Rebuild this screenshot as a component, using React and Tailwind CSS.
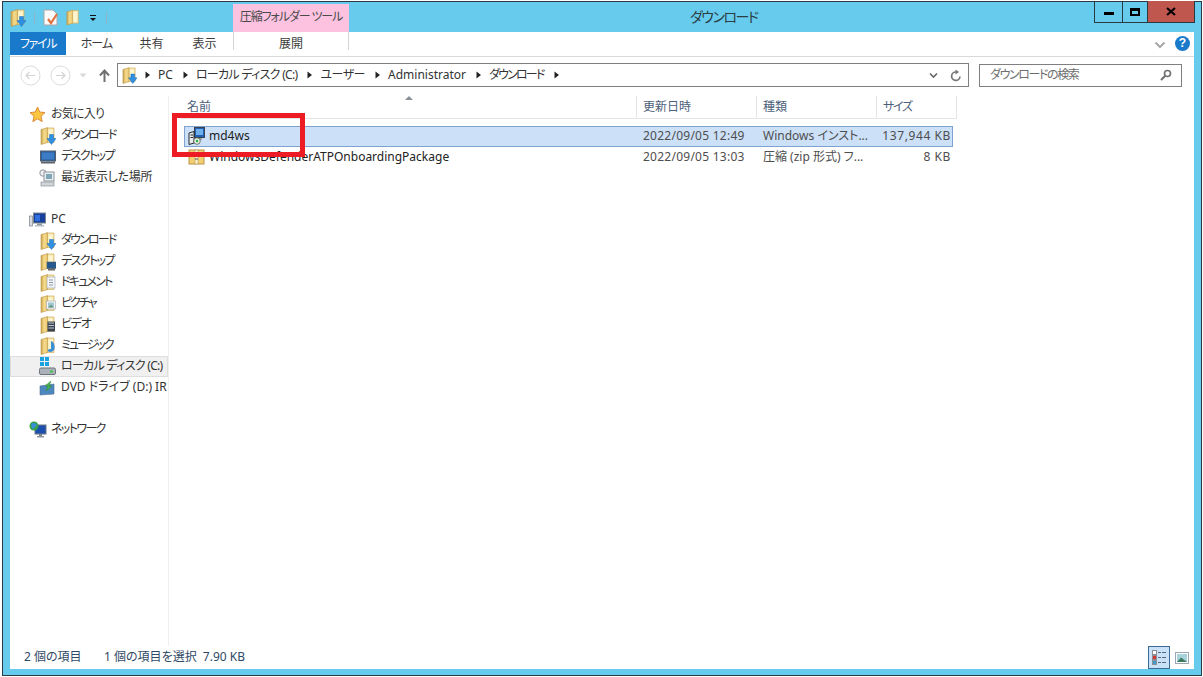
import React from "react";

const Folder = ({ children, w = 16, h = 18 }) => (
  <svg width={w} height={h} viewBox="0 0 16 18" className="shrink-0">
    <defs>
      <linearGradient id="fold" x1="0" y1="0" x2="1" y2="0">
        <stop offset="0" stopColor="#c9a24e" />
        <stop offset="0.5" stopColor="#f6dc8c" />
        <stop offset="1" stopColor="#e8c66f" />
      </linearGradient>
    </defs>
    <path d="M6 1 L14 1 L14 15.5 L6 15.5 Z" fill="#f8e7a8" stroke="#cfae66" strokeWidth="0.7" />
    <path d="M1 2.5 L7.5 0.8 L7.5 15.5 L1 17.5 Z" fill="url(#fold)" stroke="#b89346" strokeWidth="0.6" />
    <path d="M8.5 2.5 L12.8 2.5 L12.8 14 L8.5 14 Z" fill="#fdf4d0" />
    {children}
  </svg>
);
const DownArrow = () => (
  <path d="M9.5 7.5 H13.5 V11.5 H16 L11.5 17.5 L7 11.5 H9.5 Z" fill="#2f8fe0" stroke="#1b6cb8" strokeWidth="0.5" />
);
const DlFolder = () => <Folder><DownArrow /></Folder>;
const DeskFolder = () => (
  <Folder>
    <rect x="7" y="9" width="9" height="6.5" fill="#24588f" stroke="#4a5a6a" strokeWidth="0.6" />
    <rect x="8" y="16" width="7" height="1.5" fill="#666" />
  </Folder>
);
const DocFolder = () => (
  <Folder>
    <rect x="7" y="3" width="8" height="11" fill="#f4f6f8" stroke="#9aa6b2" strokeWidth="0.6" />
    <path d="M9 6H13M9 8.5H13M9 11H13" stroke="#7c8ea0" strokeWidth="0.9" />
  </Folder>
);
const PicFolder = () => (
  <Folder>
    <rect x="6.5" y="6" width="9" height="8" fill="#f7f7f7" stroke="#9aa6b2" strokeWidth="0.6" />
    <rect x="8" y="7.5" width="6" height="5" fill="#9ec6cf" />
    <path d="M8 12.5 L11 10 L14 12.5Z" fill="#5f8f7a" />
  </Folder>
);
const VidFolder = () => (
  <Folder>
    <rect x="7.5" y="5.5" width="7.5" height="10" fill="#3d4650" />
    <path d="M8.5 7H14M8.5 9.5H14M8.5 12H14" stroke="#b9c6d2" strokeWidth="1" />
  </Folder>
);
const MusicFolder = () => (
  <Folder>
    <path d="M10 15 C7 15 7 12 10 12 L11 12 L11 4 C14 5 15 8 14.5 12 C14 14 12 15 10 15Z" fill="#3b8fd6" />
  </Folder>
);

const Star = () => (
  <svg width="17" height="17" viewBox="0 0 17 17" className="shrink-0">
    <path d="M8.5 1 L10.7 6 L16 6.6 L12 10.2 L13.2 15.6 L8.5 12.8 L3.8 15.6 L5 10.2 L1 6.6 L6.3 6 Z" fill="#fbc63f" stroke="#dc8a3a" strokeWidth="1" />
  </svg>
);
const Desktop = () => (
  <svg width="16" height="14" viewBox="0 0 16 14" className="shrink-0">
    <rect x="0.5" y="1" width="15" height="10" fill="#2a5f9e" stroke="#56616d" />
    <rect x="2" y="2.5" width="12" height="7" fill="#3c7cc4" />
    <rect x="1" y="11.5" width="14" height="2" fill="#5a6570" />
  </svg>
);
const Recent = () => (
  <svg width="17" height="18" viewBox="0 0 17 18" className="shrink-0">
    <circle cx="4" cy="4" r="3.2" fill="#f2f2f2" stroke="#8d959c" />
    <rect x="5" y="3" width="10" height="9" fill="#e8edf0" stroke="#8d959c" />
    <rect x="7" y="5" width="6" height="5" fill="#7fa6b5" />
    <rect x="2" y="13" width="13" height="4" fill="#cfd4d8" stroke="#8d959c" strokeWidth="0.7" />
  </svg>
);
const PcIcon = () => (
  <svg width="17" height="16" viewBox="0 0 17 16" className="shrink-0">
    <rect x="0.5" y="4" width="3" height="10" fill="#d7dbdf" stroke="#7a838b" strokeWidth="0.7" />
    <rect x="4.5" y="1" width="12" height="10" fill="#16409c" stroke="#7d8790" />
    <path d="M6 3 H11 V9 H6Z" fill="#2f6fe0" />
    <rect x="8" y="11.5" width="5" height="1.5" fill="#8d959c" />
    <rect x="6" y="13" width="9" height="1.5" fill="#b6bcc2" />
  </svg>
);
const Drive = () => (
  <svg width="17" height="19" viewBox="0 0 17 19" className="shrink-0">
    <rect x="1" y="0" width="4" height="4" fill="#19a2e4" />
    <rect x="6" y="0" width="4" height="4" fill="#19a2e4" />
    <rect x="1" y="5" width="4" height="4" fill="#19a2e4" />
    <rect x="6" y="5" width="4" height="4" fill="#19a2e4" />
    <rect x="0.5" y="11" width="16" height="6.5" rx="1.5" fill="#aab1b8" stroke="#6c747c" />
    <rect x="11" y="13.5" width="3" height="2" fill="#3fc94a" />
  </svg>
);
const Dvd = () => (
  <svg width="17" height="16" viewBox="0 0 17 16" className="shrink-0">
    <path d="M1 6 L15 4 L15 14 L1 15 Z" fill="#4c87bf" stroke="#4d6f92" strokeWidth="0.6" />
    <path d="M12 1 L6 6 L9 6 L7 11 L13 6 L10 6 Z" fill="#48b54a" stroke="#2f8a36" strokeWidth="0.5" />
  </svg>
);
const Network = () => (
  <svg width="18" height="17" viewBox="0 0 18 17" className="shrink-0">
    <rect x="6" y="4" width="11" height="9" fill="#1b4fb0" stroke="#6d7780" />
    <rect x="10" y="13" width="3" height="2" fill="#7d868e" />
    <rect x="8" y="15" width="7" height="1.5" fill="#8f979e" />
    <circle cx="5" cy="5" r="4.5" fill="#35a24a" />
    <path d="M2 3 C4 1 7 2 8 4 C6 5 6 7 4 8 C2 7 3 5 2 3Z" fill="#3a8fd8" />
  </svg>
);

const Msi = () => (
  <svg width="17" height="18" viewBox="0 0 17 18" className="shrink-0">
    <rect x="6.5" y="0.5" width="10" height="10" fill="#1f5fb4" stroke="#39424d" />
    <rect x="8" y="2" width="7" height="6" fill="#6fb0ea" />
    <path d="M1 6 L6 4.5 L6 16 L1 17.5Z" fill="#e9ebed" stroke="#23282e" />
    <path d="M2.5 8H5M2.5 10.5H5" stroke="#23282e" />
    <rect x="7" y="11" width="7" height="2" fill="#9aa2aa" />
    <circle cx="9" cy="14" r="3.3" fill="#e4efe0" stroke="#3d4a3d" strokeWidth="0.7" />
    <circle cx="9" cy="14" r="1.2" fill="#27b24a" />
  </svg>
);
const Zip = () => (
  <svg width="17" height="16" viewBox="0 0 17 16" className="shrink-0">
    <rect x="1" y="1" width="15" height="14" fill="#f3cf72" stroke="#b9954a" />
    <rect x="7" y="1" width="3" height="14" fill="#fdf3cf" stroke="#a88c4f" strokeWidth="0.5" />
    <path d="M7 4H10M7 7H10M7 10H10" stroke="#555" strokeWidth="1" />
  </svg>
);

const Chevron = () => (
  <svg width="7" height="8" viewBox="0 0 7 8" className="shrink-0">
    <path d="M1.5 0.5 L6 4 L1.5 7.5 Z" fill="#222" />
  </svg>
);

const NavItem = ({ icon, label, indent, active, t = "" }) => (
  <div className={`h-[21px] flex items-center whitespace-nowrap overflow-hidden border ${active ? "bg-[#f0f0f0] border-[#dedede]" : "border-transparent"} ${indent ? "pl-[28px] gap-[5px]" : "pl-[18px] gap-[5px]"}`}>
    <span className="w-[17px] flex justify-center shrink-0">{icon}</span>
    <span className={`leading-[16px] pb-[1px] ${t}`}>{label}</span>
  </div>
);

const NavBtn = ({ d }) => (
  <svg width="21" height="21" viewBox="0 0 21 21" className="shrink-0">
    <circle cx="10.5" cy="10.5" r="9.5" fill="#fff" stroke="#dcdcdc" />
    <path d={d} fill="none" stroke="#d4d4d4" strokeWidth="1.2" />
  </svg>
);

const Header = ({ w, children, arrow }) => (
  <div className={`${w} relative h-full flex items-center pl-[6px] border-r border-[#e5e5e5]`}>
    {children}
    {arrow}
  </div>
);

export default function App() {
  return (
    <div
      className="w-[1203px] h-[677px] bg-white pl-[2px] pt-[1px] overflow-hidden relative text-[12px] text-[#3c3c3c] [font-feature-settings:'palt']"
      style={{ fontFamily: '"Noto Sans", "Noto Sans CJK JP", sans-serif' }}
    >
      <div className="w-[1200px] h-[675px] border border-[#2b3a42] bg-[#66cbec] flex flex-col px-[7px] pb-[6px] relative">
        {/* Title bar */}
        <div className="h-[30px] shrink-0 flex relative">
          <div className="flex items-center gap-[8px] pt-[1px] h-[26px] mt-[2px]">
            <Folder w={16} h={18}><DownArrow /></Folder>
            <div className="w-px h-[12px] bg-[#8fb5c4]" />
            <svg width="15" height="17" viewBox="0 0 15 17">
              <path d="M1 1H10L14 5V16H1Z" fill="#fafafa" stroke="#a9a9a9" />
              <path d="M5 10 L8 14 L14 5" fill="none" stroke="#e0703f" strokeWidth="2.2" />
            </svg>
            <Folder w={14} h={17} />
            <svg width="8" height="8" viewBox="0 0 8 8" className="ml-[1px]">
              <rect x="1" y="1" width="6" height="1" fill="#111" />
              <path d="M1 4 H7 L4 7Z" fill="#111" />
            </svg>
            <div className="w-px h-[12px] bg-[#8fb5c4] ml-[1px]" />
          </div>
          <div className="absolute left-[223px] top-[2px] w-[116px] h-[28px] bg-[#fcc2e0] flex items-center justify-center text-[#4a4a4a] whitespace-nowrap pb-[3px] tracking-[-1.1px]">
            圧縮フォルダー ツール
          </div>
          <div className="absolute left-[680px] top-[5px] text-[14px] leading-[20px] text-[#2c3e46] tracking-[-1.5px]">ダウンロード</div>
          <div className="absolute right-[-1px] top-[-1px] flex h-[22px] border-x border-b border-[#2b3a42]">
            <div className="w-[28px] flex items-center justify-center border-r border-[#2b3a42] pt-[3px]">
              <div className="w-[10px] h-[3px] bg-black" />
            </div>
            <div className="w-[25px] flex items-center justify-center border-r border-[#2b3a42]">
              <div className="w-[10px] h-[8px] border-2 border-black border-t-[3px]" />
            </div>
            <div className="w-[46px] flex items-center justify-center bg-[#c0574f]">
              <svg width="10" height="9" viewBox="0 0 10 9">
                <path d="M1 1 L9 8 M9 1 L1 8" stroke="#000" strokeWidth="2.2" />
              </svg>
            </div>
          </div>
        </div>

        {/* White window body */}
        <div className="flex-1 min-h-0 bg-white flex flex-col">
          {/* Ribbon tabs */}
          <div className="h-[25px] shrink-0 flex border-b border-[#d9d9d9] relative">
            <div className="w-[56px] h-[23px] bg-[#1979ca] text-white flex items-center justify-center tracking-[-1.3px]">ファイル</div>
            <div className="w-[59px] h-[23px] flex items-center justify-center tracking-[-1px] pl-[2px]">ホーム</div>
            <div className="w-[53px] h-[23px] flex items-center justify-center">共有</div>
            <div className="w-[53px] h-[23px] flex items-center justify-center">表示</div>
            <div className="ml-[2px] w-[116px] h-[18px] mt-0 border-x border-[#d4d4d4] flex items-center justify-center pt-[6px]">展開</div>
            <div className="flex-1" />
            <svg width="12" height="8" viewBox="0 0 12 8" className="mt-[9px] mr-[9px]">
              <path d="M1.5 1.5 L6 6 L10.5 1.5" fill="none" stroke="#a8a8a8" strokeWidth="2" />
            </svg>
            <div className="w-[15px] h-[15px] mt-[4px] mr-[4px] rounded-full bg-[#1979ca] text-white text-[12px] font-bold leading-[15px] text-center" style={{ fontFamily: '"Liberation Sans", sans-serif' }}>?</div>
          </div>

          {/* Address row */}
          <div className="h-[39px] shrink-0 flex items-center pl-[10px] pr-[12px] pb-[3px]">
            <NavBtn d="M15 10.5H6M9.5 7L6 10.5L9.5 14" />
            <div className="w-[9px]" />
            <NavBtn d="M6 10.5H15M11.5 7L15 10.5L11.5 14" />
            <svg width="8" height="5" viewBox="0 0 8 5" className="ml-[8px]"><path d="M0.5 0.5H7.5L4 4.5Z" fill="#d9d9d9" /></svg>
            <svg width="11" height="13" viewBox="0 0 11 13" className="ml-[12px]">
              <path d="M5.5 13V2M1 6.5L5.5 1.5L10 6.5" fill="none" stroke="#6f6f6f" strokeWidth="2" />
            </svg>
            <div className="ml-[7px] w-[852px] h-[24px] border border-[#7f7f7f] flex items-center pl-[4px] text-[#333] whitespace-nowrap">
              <Folder w={15} h={17}><DownArrow /></Folder>
              <span className="ml-[7px]"><Chevron /></span>
              <span className="ml-[7px]">PC</span>
              <span className="ml-[9px]"><Chevron /></span>
              <span className="ml-[7px] tracking-[-0.7px]">ローカル ディスク (C:)</span>
              <span className="ml-[9px]"><Chevron /></span>
              <span className="ml-[7px] tracking-[-0.5px]">ユーザー</span>
              <span className="ml-[9px]"><Chevron /></span>
              <span className="ml-[7px]">Administrator</span>
              <span className="ml-[9px]"><Chevron /></span>
              <span className="ml-[7px] tracking-[-1.8px]">ダウンロード</span>
              <span className="ml-[9px]"><Chevron /></span>
              <div className="flex-1" />
              <svg width="9" height="7" viewBox="0 0 9 7" className="mr-[12px]">
                <path d="M1 1.5L4.5 5L8 1.5" fill="none" stroke="#666" strokeWidth="1.6" />
              </svg>
              <svg width="12" height="13" viewBox="0 0 12 13" className="mr-[6px]">
                <path d="M10 7.5A4.2 4.2 0 1 1 6 3" fill="none" stroke="#777" strokeWidth="1.7" />
                <path d="M5.5 0.5L9 3L5.5 5.5Z" fill="#777" />
              </svg>
            </div>
            <div className="ml-[10px] w-[203px] h-[23px] border border-[#7f7f7f] flex items-center pl-[10px] pr-[9px] text-[#6d6d6d] whitespace-nowrap">
              <span className="tracking-[-1.4px]">ダウンロードの検索</span>
              <div className="flex-1" />
              <svg width="12" height="12" viewBox="0 0 12 12">
                <circle cx="7.5" cy="4.5" r="3" fill="none" stroke="#6f6f6f" strokeWidth="1.6" />
                <path d="M5 7L1 11" stroke="#6f6f6f" strokeWidth="2" />
              </svg>
            </div>
          </div>

          {/* Main */}
          <div className="flex-1 min-h-0 flex">
            <div className="w-[159px] shrink-0 border-r border-[#efefef] pt-[8px] overflow-hidden text-[#333]">
              <NavItem t="tracking-[-0.8px]" icon={<Star />} label="お気に入り" />
              <NavItem t="tracking-[-1.8px]" indent icon={<DlFolder />} label="ダウンロード" />
              <NavItem t="tracking-[-1.6px]" indent icon={<Desktop />} label="デスクトップ" />
              <NavItem t="tracking-[-0.3px]" indent icon={<Recent />} label="最近表示した場所" />
              <div className="h-[21px]" />
              <NavItem icon={<PcIcon />} label="PC" />
              <NavItem t="tracking-[-1.8px]" indent icon={<DlFolder />} label="ダウンロード" />
              <NavItem t="tracking-[-1.6px]" indent icon={<DeskFolder />} label="デスクトップ" />
              <NavItem t="tracking-[-1.8px]" indent icon={<DocFolder />} label="ドキュメント" />
              <NavItem t="tracking-[-2px]" indent icon={<PicFolder />} label="ピクチャ" />
              <NavItem t="tracking-[-1.3px]" indent icon={<VidFolder />} label="ビデオ" />
              <NavItem t="tracking-[-2px]" indent icon={<MusicFolder />} label="ミュージック" />
              <NavItem t="tracking-[-0.7px]" indent active icon={<Drive />} label="ローカル ディスク (C:)" />
              <NavItem indent icon={<Dvd />} label="DVD ドライブ (D:) IR" />
              <div className="h-[21px]" />
              <NavItem t="tracking-[-1.6px]" icon={<Network />} label="ネットワーク" />
            </div>

            <div className="flex-1 min-w-0 pl-[12px]">
              <div className="h-[23px] flex w-[776px] border-b border-[#e5e5e5] text-[#4c607a]">
                <Header
                  w="w-[456px]"
                  arrow={<svg width="8" height="4" viewBox="0 0 8 4" className="absolute left-[224px] top-0"><path d="M0 4L4 0L8 4Z" fill="#8a9098" /></svg>}
                >
                  名前
                </Header>
                <Header w="w-[120px]">更新日時</Header>
                <Header w="w-[120px]">種類</Header>
                <Header w="w-[80px]"><span className="tracking-[-1.3px]">サイズ</span></Header>
              </div>
              <div className="mt-[7px] w-[769px] ml-[3px] h-[21px] bg-[#cce0f8] border border-[#7da2ce] flex items-center text-[#4e4e4e] [&>div]:pb-[2px]">
                <div className="w-[453px] flex items-center pl-[3px] gap-[4px] text-[#222]"><Msi /><span>md4ws</span></div>
                <div className="w-[120px] pl-[5px] tracking-[0.25px]">2022/09/05 12:49</div>
                <div className="w-[120px] pl-[5px] whitespace-nowrap">Windows インスト...</div>
                <div className="w-[73px] text-right tracking-[0.6px]">137,944 KB</div>
              </div>
              <div className="w-[769px] ml-[3px] h-[21px] border border-transparent flex items-center text-[#4e4e4e] [&>div]:pb-[2px]">
                <div className="w-[453px] flex items-center pl-[3px] gap-[4px] text-[#222]"><Zip /><span>WindowsDefenderATPOnboardingPackage</span></div>
                <div className="w-[120px] pl-[5px] tracking-[0.25px]">2022/09/05 13:03</div>
                <div className="w-[120px] pl-[5px] whitespace-nowrap">圧縮 (zip 形式) フ...</div>
                <div className="w-[73px] text-right tracking-[0.6px]">8 KB</div>
              </div>
            </div>
          </div>

          {/* Status */}
          <div className="h-[23px] shrink-0 flex items-center pl-[14px] text-[#2f4a66]">
            <span className="w-[80px] pb-[2px]">2 個の項目</span>
            <span className="pb-[2px]">1 個の項目を選択&nbsp;&nbsp;7.90 KB</span>
            <div className="flex-1" />
            <div className="w-[22px] h-[23px] bg-[#c9e2f7] border border-[#3c6a96] flex items-center justify-center">
              <svg width="15" height="15" viewBox="0 0 15 15">
                <rect x="0.5" y="0.5" width="4" height="4" fill="#fff" stroke="#8a8f96" />
                <rect x="0.5" y="5.5" width="4" height="4" fill="#d33" stroke="#8a8f96" />
                <rect x="0.5" y="10.5" width="4" height="4" fill="#49c" stroke="#8a8f96" />
                <path d="M6 2.5H9M10 2.5H14M6 7.5H9M10 7.5H14M6 12.5H9M10 12.5H14" stroke="#5a6a7a" />
              </svg>
            </div>
            <div className="w-[24px] h-[23px] flex items-center justify-center">
              <svg width="14" height="12" viewBox="0 0 14 12">
                <rect x="0.5" y="0.5" width="13" height="11" fill="#fff" stroke="#9aa6b2" />
                <rect x="2" y="2" width="10" height="8" fill="#a8d2dc" />
                <path d="M2 10 L6 5.5 L12 10Z" fill="#3d7a62" />
              </svg>
            </div>
          </div>
        </div>
      </div>
      {/* Red annotation rectangle */}
      <div className="absolute left-[172px] top-[113px] w-[133px] h-[44px] border-[5px] border-[#ed1c24]" />
    </div>
  );
}
